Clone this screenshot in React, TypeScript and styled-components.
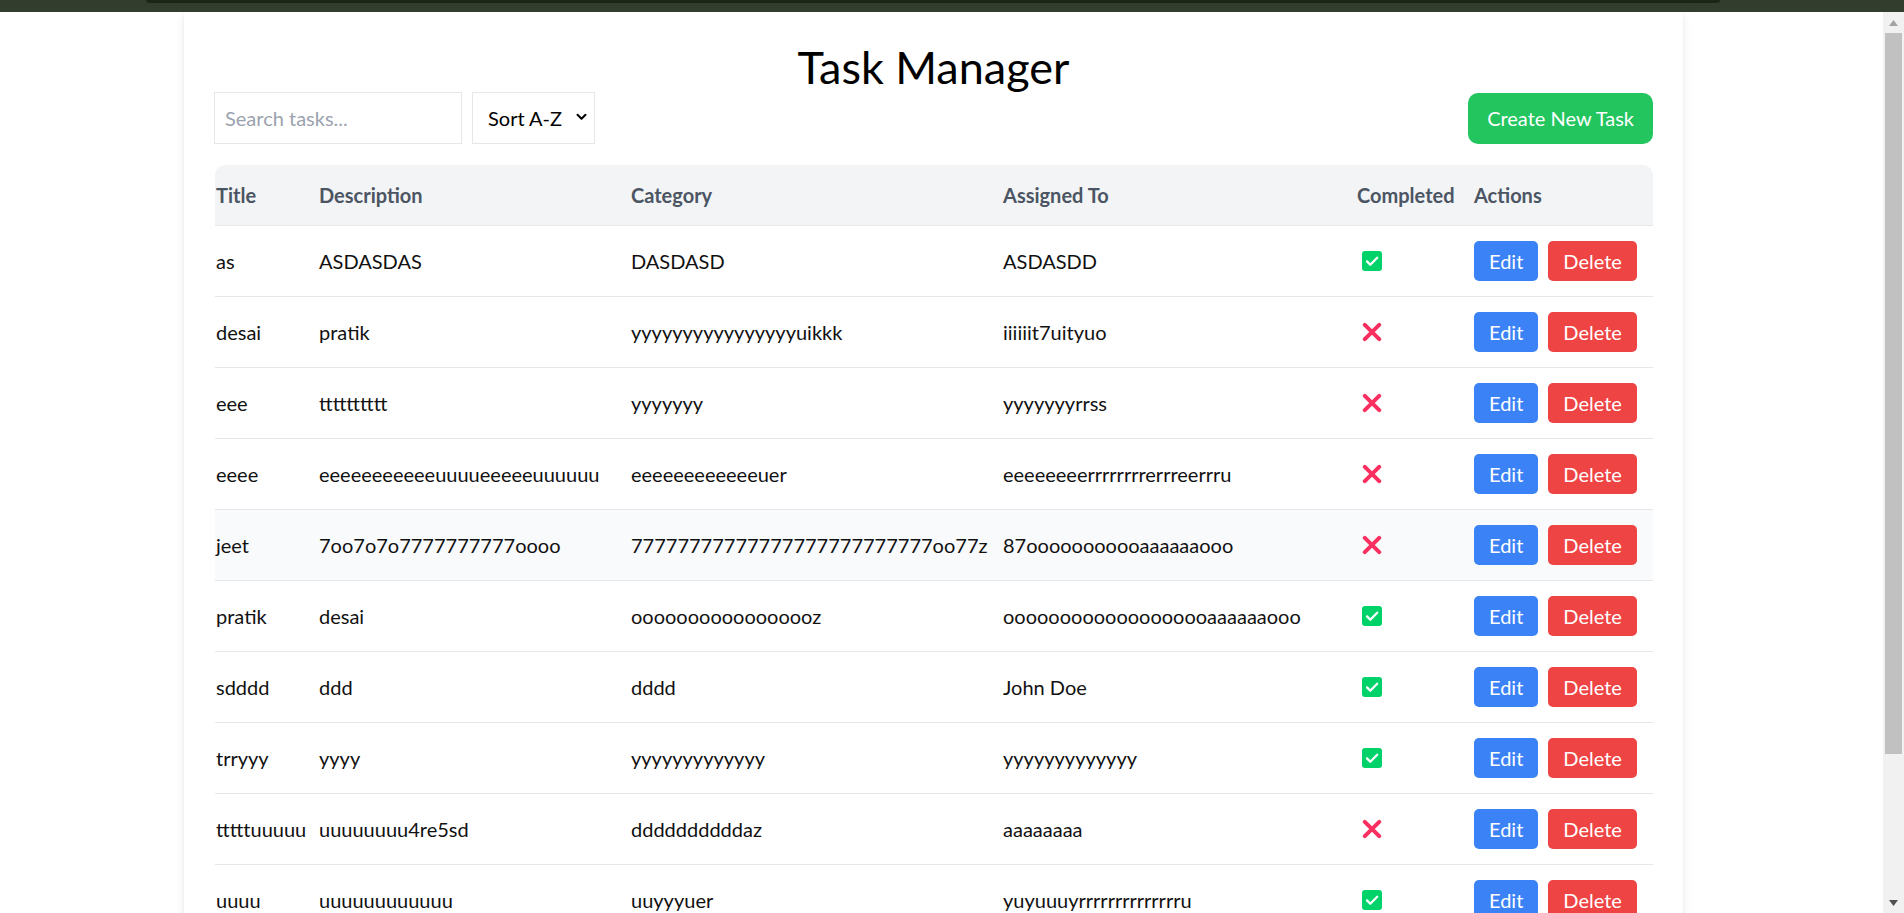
import styled, { createGlobalStyle } from 'styled-components';

const GlobalStyle = createGlobalStyle`
  html, body {
    margin: 0;
    padding: 0;
    overflow: hidden;
    background: #ffffff;
  }
  body {
    font-family: Lato, 'Noto Sans', sans-serif;
    color: #111111;
  }
  * {
    box-sizing: border-box;
  }
`;

type Task = {
  title: string;
  description: string;
  category: string;
  assignedTo: string;
  completed: boolean;
};

const tasks: Task[] = [
  { title: 'as', description: 'ASDASDAS', category: 'DASDASD', assignedTo: 'ASDASDD', completed: true },
  { title: 'desai', description: 'pratik', category: 'yyyyyyyyyyyyyyyyuikkk', assignedTo: 'iiiiiit7uityuo', completed: false },
  { title: 'eee', description: 'tttttttttt', category: 'yyyyyyy', assignedTo: 'yyyyyyyrrss', completed: false },
  { title: 'eeee', description: 'eeeeeeeeeeeuuuueeeeeuuuuuu', category: 'eeeeeeeeeeeeuer', assignedTo: 'eeeeeeeerrrrrrrrerrreerrru', completed: false },
  { title: 'jeet', description: '7oo7o7o7777777777oooo', category: '77777777777777777777777777oo77z', assignedTo: '87ooooooooooaaaaaaooo', completed: false },
  { title: 'pratik', description: 'desai', category: 'ooooooooooooooooz', assignedTo: 'ooooooooooooooooooaaaaaaooo', completed: true },
  { title: 'sdddd', description: 'ddd', category: 'dddd', assignedTo: 'John Doe', completed: true },
  { title: 'trryyy', description: 'yyyy', category: 'yyyyyyyyyyyyy', assignedTo: 'yyyyyyyyyyyyy', completed: true },
  { title: 'tttttuuuuu', description: 'uuuuuuuu4re5sd', category: 'ddddddddddaz', assignedTo: 'aaaaaaaa', completed: false },
  { title: 'uuuu', description: 'uuuuuuuuuuuu', category: 'uuyyyuer', assignedTo: 'yuyuuuyrrrrrrrrrrrrrru', completed: true },
];

const columns = [
  { label: 'Title', width: 103 },
  { label: 'Description', width: 312 },
  { label: 'Category', width: 372 },
  { label: 'Assigned To', width: 354 },
  { label: 'Completed', width: 117 },
  { label: 'Actions', width: 180 },
];

const Screen = styled.div`
  display: flex;
  flex-direction: column;
  height: 100vh;
`;

const TopStrip = styled.div`
  height: 12px;
  flex: none;
  background: #333d2d;
  padding: 0 184px 0 146px;
`;

const StripNotch = styled.div`
  height: 3px;
  background: #1d2616;
  border-radius: 0 0 3px 3px;
`;

const Body = styled.div`
  flex: 1;
  display: flex;
  min-height: 0;
`;

const Viewport = styled.main`
  flex: 1;
  overflow: hidden;
`;

const Card = styled.section`
  width: 1499px;
  margin-left: 184px;
  padding: 30px 30px 0;
  background: #ffffff;
  box-shadow: 0 4px 10px rgba(0, 0, 0, 0.08), 0 1px 3px rgba(0, 0, 0, 0.05);
  min-height: 100%;
`;

const Heading = styled.h1`
  margin: 0;
  font-size: 45px;
  line-height: 50px;
  font-weight: 400;
  text-align: center;
  color: #000000;
`;

const Toolbar = styled.div`
  display: flex;
  align-items: center;
  justify-content: space-between;
  margin-bottom: 21px;
`;

const Filters = styled.div`
  display: flex;
  gap: 10px;
`;

const SearchInput = styled.input`
  width: 248px;
  height: 52px;
  padding: 0 10px;
  border: 1px solid #e5e7eb;
  border-radius: 0;
  font-family: inherit;
  font-size: 20px;
  color: #111111;
  outline: none;

  &::placeholder {
    color: #9ca3af;
  }
`;

const SelectWrap = styled.div`
  position: relative;
`;

const Select = styled.select`
  appearance: none;
  width: 123px;
  height: 52px;
  padding: 0 0 0 15px;
  border: 1px solid #e5e7eb;
  border-radius: 0;
  background: #ffffff;
  font-family: inherit;
  font-size: 20px;
  color: #000000;
  outline: none;
`;

const Chevron = styled.svg`
  position: absolute;
  right: 8px;
  top: 21px;
  pointer-events: none;
`;

const CreateButton = styled.button`
  height: 51px;
  padding: 0 19px;
  border: none;
  border-radius: 10px;
  background: #22c55e;
  color: #ffffff;
  font-family: inherit;
  font-size: 20px;
  cursor: pointer;
`;

const Table = styled.table`
  width: 1438px;
  margin-left: 1px;
  table-layout: fixed;
  border-collapse: separate;
  border-spacing: 0;
  text-align: left;
`;

const HeadCell = styled.th`
  padding: 15px 0 15px 1px;
  font-size: 20px;
  line-height: 30px;
  font-weight: 700;
  color: #4b5563;
  background: #f3f4f6;
  border-bottom: 1px solid #e5e7eb;
  white-space: nowrap;

  &:first-child {
    border-top-left-radius: 10px;
  }
  &:last-child {
    border-top-right-radius: 10px;
  }
`;

const Row = styled.tr<{ $highlight?: boolean }>`
  background: ${(p) => (p.$highlight ? '#f9fafb' : '#ffffff')};
`;

const Cell = styled.td`
  box-sizing: content-box;
  height: 70px;
  padding: 0 0 0 1px;
  font-size: 20px;
  line-height: 30px;
  color: #111111;
  border-bottom: 1px solid #e5e7eb;
  white-space: nowrap;
  overflow: hidden;
  vertical-align: middle;
`;

const StatusIcon = styled.svg`
  display: block;
  margin-left: 5px;
`;

const Actions = styled.div`
  display: flex;
  gap: 10px;
`;

const ActionButton = styled.button<{ $tone: 'edit' | 'delete' }>`
  height: 40px;
  padding: 0 15px;
  border: none;
  border-radius: 5px;
  background: ${(p) => (p.$tone === 'edit' ? '#3b82f6' : '#ef4444')};
  color: #ffffff;
  font-family: inherit;
  font-size: 20px;
  cursor: pointer;
`;

const ScrollTrack = styled.div`
  width: 21px;
  flex: none;
  display: flex;
  flex-direction: column;
  background: #f1f1f1;
`;

const ScrollArrow = styled.div`
  height: 21px;
  flex: none;
  display: flex;
  align-items: center;
  justify-content: center;
`;

const ScrollThumb = styled.div`
  height: 721px;
  margin: 0 2px;
  background: #c1c1c1;
`;

const ScrollSpacer = styled.div`
  flex: 1;
`;

function CheckMark() {
  return (
    <StatusIcon width="20" height="20" viewBox="0 0 20 20">
      <rect x="0" y="0" width="20" height="20" rx="3" fill="#00d26a" />
      <path d="M5 10.4l3.3 3.3L15.2 6.8" fill="none" stroke="#ffffff" strokeWidth="2.3" strokeLinecap="round" strokeLinejoin="round" />
    </StatusIcon>
  );
}

function CrossMark() {
  return (
    <StatusIcon width="20" height="20" viewBox="0 0 20 20">
      <path d="M2.8 2.8L17.2 17.2M17.2 2.8L2.8 17.2" fill="none" stroke="#f92f60" strokeWidth="4" strokeLinecap="round" />
    </StatusIcon>
  );
}

export default function App() {
  return (
    <>
      <GlobalStyle />
      <Screen>
        <TopStrip>
          <StripNotch />
        </TopStrip>
        <Body>
          <Viewport>
            <Card>
              <Heading>Task Manager</Heading>
              <Toolbar>
                <Filters>
                  <SearchInput type="text" placeholder="Search tasks..." />
                  <SelectWrap>
                    <Select defaultValue="asc">
                      <option value="asc">Sort A-Z</option>
                      <option value="desc">Sort Z-A</option>
                    </Select>
                    <Chevron width="11" height="8" viewBox="0 0 11 8">
                      <path d="M1.5 1.8l4 4 4-4" fill="none" stroke="#000000" strokeWidth="2" strokeLinecap="round" strokeLinejoin="round" />
                    </Chevron>
                  </SelectWrap>
                </Filters>
                <CreateButton>Create New Task</CreateButton>
              </Toolbar>
              <Table>
                <colgroup>
                  {columns.map((c) => (
                    <col key={c.label} style={{ width: c.width }} />
                  ))}
                </colgroup>
                <thead>
                  <tr>
                    {columns.map((c) => (
                      <HeadCell key={c.label}>{c.label}</HeadCell>
                    ))}
                  </tr>
                </thead>
                <tbody>
                  {tasks.map((t) => (
                    <Row key={t.title} $highlight={t.title === 'jeet'}>
                      <Cell>{t.title}</Cell>
                      <Cell>{t.description}</Cell>
                      <Cell>{t.category}</Cell>
                      <Cell>{t.assignedTo}</Cell>
                      <Cell>{t.completed ? <CheckMark /> : <CrossMark />}</Cell>
                      <Cell>
                        <Actions>
                          <ActionButton $tone="edit">Edit</ActionButton>
                          <ActionButton $tone="delete">Delete</ActionButton>
                        </Actions>
                      </Cell>
                    </Row>
                  ))}
                </tbody>
              </Table>
            </Card>
          </Viewport>
          <ScrollTrack>
            <ScrollArrow>
              <svg width="9" height="6" viewBox="0 0 9 6">
                <path d="M4.5 0L9 6H0z" fill="#a3a3a3" />
              </svg>
            </ScrollArrow>
            <ScrollThumb />
            <ScrollSpacer />
            <ScrollArrow>
              <svg width="9" height="6" viewBox="0 0 9 6">
                <path d="M0 0H9L4.5 6z" fill="#505050" />
              </svg>
            </ScrollArrow>
          </ScrollTrack>
        </Body>
      </Screen>
    </>
  );
}
